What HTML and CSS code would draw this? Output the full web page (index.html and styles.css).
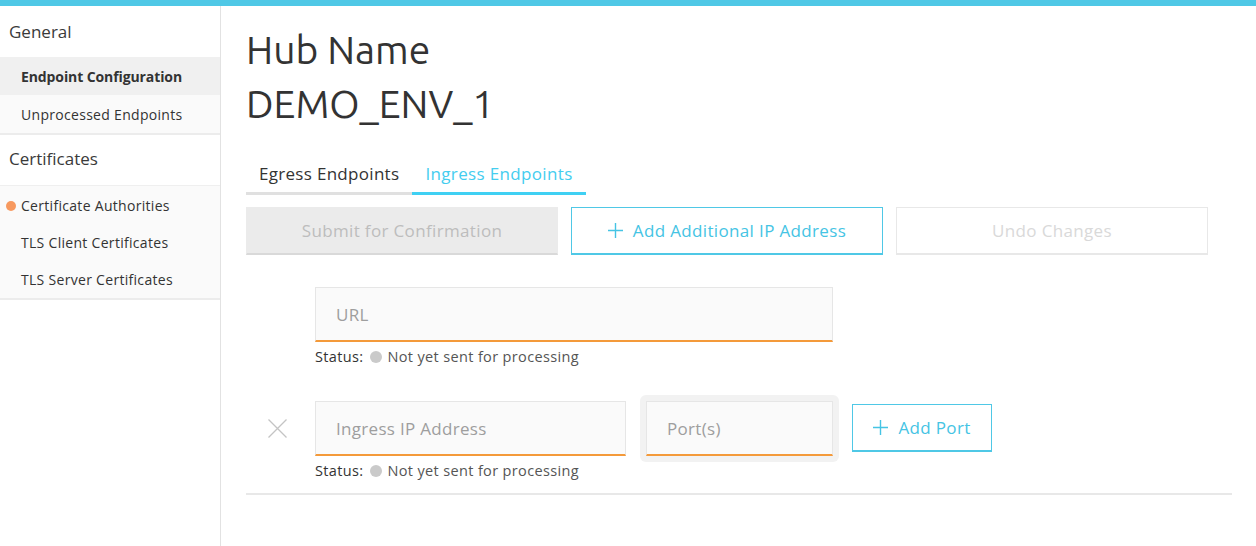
FILE: index.html
```html
<!DOCTYPE html>
<html lang="en">
<head>
<meta charset="utf-8">
<title>Hub Name</title>
<link rel="stylesheet" href="styles.css">
</head>
<body>
<div class="topbar"></div>
<div class="layout">
  <nav class="sidebar">
    <div class="side-head">General</div>
    <div class="side-group">
      <div class="side-item active">Endpoint Configuration</div>
      <div class="side-item">Unprocessed Endpoints</div>
    </div>
    <div class="side-head side-head-lined">Certificates</div>
    <div class="side-group side-group-tight">
      <div class="side-item"><span class="dot"></span>Certificate Authorities</div>
      <div class="side-item">TLS Client Certificates</div>
      <div class="side-item">TLS Server Certificates</div>
    </div>
  </nav>
  <main class="main">
    <h1 class="title">Hub Name<br>DEMO_ENV_1</h1>
    <div class="tabs">
      <div class="tab">Egress Endpoints</div>
      <div class="tab tab-active">Ingress Endpoints</div>
    </div>
    <div class="actions">
      <button class="btn btn-disabled">Submit for Confirmation</button>
      <button class="btn btn-outline"><svg class="plus" width="15" height="15" viewBox="0 0 15 15"><path d="M7.5 0 V15 M0 7.5 H15" stroke="#45c4e4" stroke-width="1.4" fill="none"/></svg>Add Additional IP Address</button>
      <button class="btn btn-ghost">Undo Changes</button>
    </div>
    <div class="form">
      <div class="row">
        <div class="row-icon"></div>
        <div class="field field-url">
          <div class="input">URL</div>
          <div class="status">Status: <span class="status-dot"></span><span class="status-text">Not yet sent for processing</span></div>
        </div>
      </div>
      <div class="row row-ip">
        <div class="row-icon">
          <svg width="19" height="19" viewBox="0 0 19 19" class="close-icon"><path d="M0.5 0.5 L18.5 18.5 M18.5 0.5 L0.5 18.5" stroke="#c4c4c4" stroke-width="1.3" fill="none"/></svg>
        </div>
        <div class="field field-ip">
          <div class="input">Ingress IP Address</div>
          <div class="status">Status: <span class="status-dot"></span><span class="status-text">Not yet sent for processing</span></div>
        </div>
        <div class="port-ring">
          <div class="input input-port">Port(s)</div>
        </div>
        <button class="btn btn-outline btn-port"><svg class="plus" width="15" height="15" viewBox="0 0 15 15"><path d="M7.5 0 V15 M0 7.5 H15" stroke="#45c4e4" stroke-width="1.4" fill="none"/></svg>Add Port</button>
      </div>
    </div>
    <div class="divider"></div>
  </main>
</div>
</body>
</html>
```
FILE: styles.css
```css
* { box-sizing: border-box; }
html, body { margin: 0; padding: 0; }
body {
  font-family: "Open Sans", "DejaVu Sans", sans-serif;
  color: #333;
  background: #fff;
  width: 1256px;
  height: 546px;
  overflow: hidden;
}
.topbar { height: 6px; background: #4fc8e6; }
.layout { display: flex; height: 540px; }

.sidebar {
  width: 221px;
  border-right: 1px solid #e2e2e2;
  flex: none;
}
.side-head {
  height: 51px;
  display: flex;
  align-items: center;
  padding-left: 9px;
  font-size: 17px;
  color: #3a3a3a;
}
.side-head-lined { border-bottom: 1px solid #efefef; padding-bottom: 3px; }
.side-group {
  background: #fafafa;
  border-bottom: 2px solid #ececec;
}
.side-item {
  height: 38px;
  display: flex;
  align-items: center;
  padding-left: 21px;
  font-size: 14px;
  color: #333;
  position: relative;
  letter-spacing: 0.3px;
}
.side-group-tight { padding-top: 1px; }
.side-group-tight .side-item { height: 37px; }
.side-item.active { background: #f0f0f0; font-weight: 700; letter-spacing: -0.1px; }
.dot {
  position: absolute;
  left: 6px;
  top: 50%;
  margin-top: -5px;
  width: 10px;
  height: 10px;
  border-radius: 50%;
  background: #f7995f;
}

.main { flex: 1; padding: 0 24px 0 25px; }
.title {
  margin: 17px 0 0 0;
  font-family: "Ubuntu", "Open Sans", sans-serif;
  font-weight: 400;
  font-size: 39px;
  line-height: 54px;
  color: #333;
}
.tabs { display: flex; margin-top: 31px; }
.tab {
  padding: 0 13px 6px;
  font-size: 17px;
  line-height: 24px;
  letter-spacing: 0.3px;
  color: #333;
  border-bottom: 3px solid #e0e0e0;
}
.tab-active { color: #44cdef; border-bottom-color: #3fd0f3; letter-spacing: 0.35px; }

.actions { display: flex; gap: 13px; margin-top: 12px; }
.btn {
  width: 312px;
  height: 48px;
  font-family: inherit;
  font-size: 17px;
  letter-spacing: 0.35px;
  background: #fff;
  border: 1px solid transparent;
  border-bottom-width: 2px;
  padding: 0;
  display: flex;
  align-items: center;
  justify-content: center;
}
.btn-disabled { background: #ebebeb; color: #bdbdbd; border-color: #ebebeb; border-bottom-color: #d9d9d9; }
.btn-outline { border-color: #4fc8e6; color: #45c4e4; }
.btn-ghost { border-color: #e8e8e8; color: #d9d9d9; }
.plus { margin-right: 10px; flex: none; }

.form { margin-top: 32px; }
.row { display: flex; align-items: flex-start; }
.row-icon { width: 69px; flex: none; display: flex; justify-content: center; padding-top: 18px; padding-right: 7px; }
.row-ip { margin-top: 34px; }
.field { flex: none; }
.field-url { width: 518px; }
.field-ip { width: 311px; }
.input {
  height: 55px;
  background: #fafafa;
  border: 1px solid #e6e6e6;
  border-bottom: 2px solid #f49a3a;
  padding-left: 20px;
  display: flex;
  align-items: center;
  font-size: 17px;
  letter-spacing: 0.3px;
  color: #9e9e9e;
}
.status {
  margin-top: 5px;
  font-size: 14.5px;
  line-height: 20px;
  letter-spacing: 0.35px;
  color: #333;
  display: flex;
  align-items: center;
  white-space: pre;
}
.status-dot {
  width: 12px;
  height: 12px;
  border-radius: 50%;
  background: #cacaca;
  margin: 0 6px 0 2px;
}
.status-text { color: #555; }
.port-ring {
  margin: -6px 0 0 14px;
  padding: 6px;
  background: #f2f2f2;
  border-radius: 6px;
}
.input-port { width: 187px; }
.btn-port { width: 140px; height: 48px; margin: 3px 0 0 13px; }

.divider { height: 2px; background: #e8e8e8; margin-top: 12px; }
```
